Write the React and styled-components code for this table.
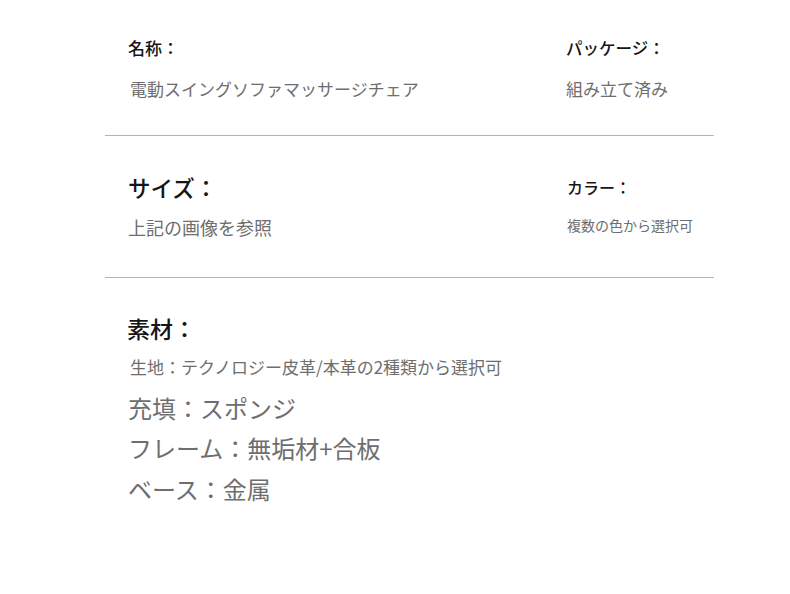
import React from "react";
import styled, { createGlobalStyle } from "styled-components";

const GlobalStyle = createGlobalStyle`
    body {
        margin: 0;
        background: #ffffff;
        font-family: "Noto Sans CJK JP", "Noto Sans", sans-serif;
    }
`;

const Sheet = styled.div`
    width: 609px;
    margin-left: 105px;
`;

const Section = styled.section`
    display: grid;
    grid-template-columns: 438px 1fr;
    padding: ${(p) => p.$pad};
    border-bottom: ${(p) => (p.$last ? "none" : "1px solid #b4b4b4")};
`;

const Cell = styled.div`
    display: flex;
    flex-direction: column;
    padding-left: ${(p) => p.$indent || "23px"};
`;

const Label = styled.div`
    font-size: ${(p) => p.$size};
    line-height: 30px;
    font-weight: 500;
    color: #161616;
    margin-bottom: ${(p) => p.$gap || "11px"};
`;

const Value = styled.div`
    font-size: ${(p) => p.$size};
    line-height: 30px;
    color: #6e6e6e;
    padding-left: ${(p) => p.$shift || "0"};
`;

const MaterialLine = styled.div`
    font-size: ${(p) => p.$size};
    line-height: 40.5px;
    color: #6e6e6e;
    padding-left: ${(p) => p.$shift || "0"};
`;

const App = () => {
    return (
        <>
            <GlobalStyle />
            <Sheet>
                <Section $pad="33px 0 31px">
                    <Cell>
                        <Label $size="17px">名称：</Label>
                        <Value $size="17px" $shift="2px">
                            電動スイングソファマッサージチェア
                        </Value>
                    </Cell>
                    <Cell>
                        <Label $size="16.5px">パッケージ：</Label>
                        <Value $size="17px">組み立て済み</Value>
                    </Cell>
                </Section>
                <Section $pad="36px 0 35px">
                    <Cell>
                        <Label $size="22.5px" $gap="10px">
                            サイズ：
                        </Label>
                        <Value $size="18px">上記の画像を参照</Value>
                    </Cell>
                    <Cell $indent="24px">
                        <Label $size="16px" $gap="8px">
                            カラー：
                        </Label>
                        <Value $size="14px">複数の色から選択可</Value>
                    </Cell>
                </Section>
                <Section $pad="35px 0 40px" $last>
                    <Cell $indent="22px">
                        <Label $size="23px" $gap="4px">
                            素材：
                        </Label>
                        <MaterialLine $size="17px" $shift="3px">
                            生地：テクノロジー皮革/本革の2種類から選択可
                        </MaterialLine>
                        <MaterialLine $size="24px" $shift="1px">
                            充填：スポンジ
                        </MaterialLine>
                        <MaterialLine $size="24px" $shift="1px">
                            フレーム：無垢材+合板
                        </MaterialLine>
                        <MaterialLine $size="24px" $shift="1px">
                            ベース：金属
                        </MaterialLine>
                    </Cell>
                </Section>
            </Sheet>
        </>
    );
};

export default App;
